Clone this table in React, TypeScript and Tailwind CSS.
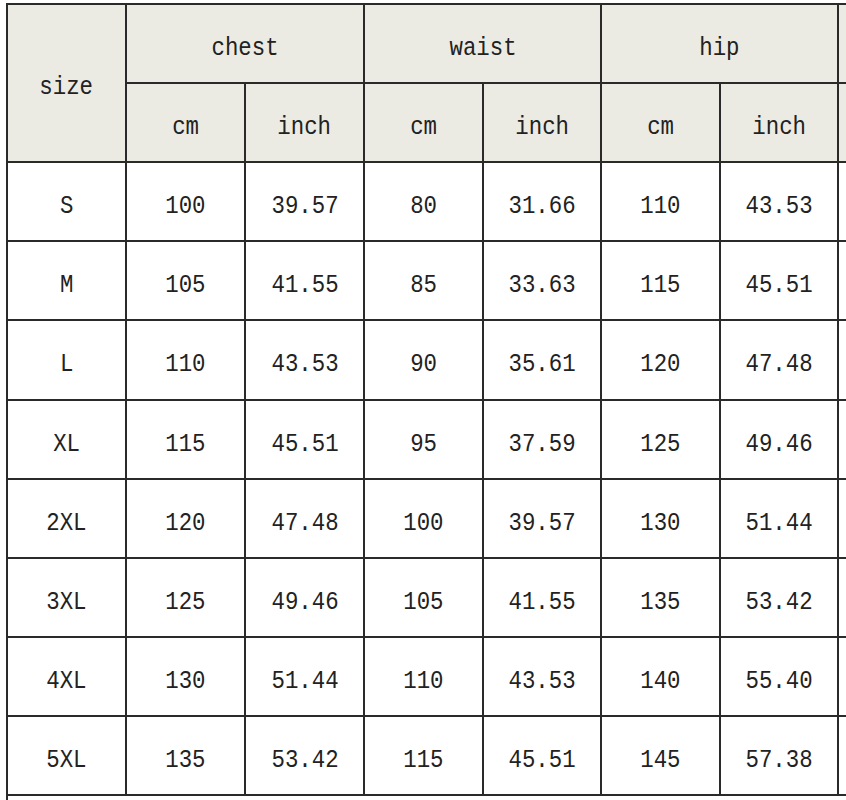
import React from "react";

const rows: string[][] = [
  ["S", "100", "39.57", "80", "31.66", "110", "43.53"],
  ["M", "105", "41.55", "85", "33.63", "115", "45.51"],
  ["L", "110", "43.53", "90", "35.61", "120", "47.48"],
  ["XL", "115", "45.51", "95", "37.59", "125", "49.46"],
  ["2XL", "120", "47.48", "100", "39.57", "130", "51.44"],
  ["3XL", "125", "49.46", "105", "41.55", "135", "53.42"],
  ["4XL", "130", "51.44", "110", "43.53", "140", "55.40"],
  ["5XL", "135", "53.42", "115", "45.51", "145", "57.38"],
];

function T({ children }: { children: React.ReactNode }) {
  return <span className="inline-block scale-x-[0.86] whitespace-nowrap">{children}</span>;
}

const cell = "border-2 border-[#2a2a2a] text-center align-middle p-0 pt-[8px]";

export default function App() {
  return (
    <div className="w-[846px] h-[800px] overflow-hidden bg-white">
      <table
        className="ml-[6px] mt-[3px] border-collapse table-fixed text-[#222] text-[26px] leading-none"
        style={{ fontFamily: '"Liberation Mono", "DejaVu Sans Mono", monospace', width: 119 * 8 }}
      >
        <colgroup>
          <col className="w-[119px]" />
          <col className="w-[119px]" />
          <col className="w-[119px]" />
          <col className="w-[119px]" />
          <col className="w-[118px]" />
          <col className="w-[119px]" />
          <col className="w-[118px]" />
          <col className="w-[119px]" />
        </colgroup>
        <thead>
          <tr className="h-[79px] bg-[#ecebe3]">
            <th rowSpan={2} className={cell + " font-normal"}>
              <T>size</T>
            </th>
            <th colSpan={2} className={cell + " font-normal"}>
              <T>chest</T>
            </th>
            <th colSpan={2} className={cell + " font-normal"}>
              <T>waist</T>
            </th>
            <th colSpan={2} className={cell + " font-normal"}>
              <T>hip</T>
            </th>
            <th className={cell + " font-normal"}></th>
          </tr>
          <tr className="h-[79px] bg-[#ecebe3]">
            <th className={cell + " font-normal"}><T>cm</T></th>
            <th className={cell + " font-normal"}><T>inch</T></th>
            <th className={cell + " font-normal"}><T>cm</T></th>
            <th className={cell + " font-normal"}><T>inch</T></th>
            <th className={cell + " font-normal"}><T>cm</T></th>
            <th className={cell + " font-normal"}><T>inch</T></th>
            <th className={cell + " font-normal"}></th>
          </tr>
        </thead>
        <tbody>
          {rows.map((r) => (
            <tr key={r[0]} className={r[0] === "L" ? "h-[80px]" : "h-[79px]"}>
              {r.map((v, i) => (
                <td key={i} className={cell}>
                  <T>{v}</T>
                </td>
              ))}
              <td className={cell}></td>
            </tr>
          ))}
          <tr className="h-[79px]">
            <td colSpan={8} className={cell}></td>
          </tr>
        </tbody>
      </table>
    </div>
  );
}
